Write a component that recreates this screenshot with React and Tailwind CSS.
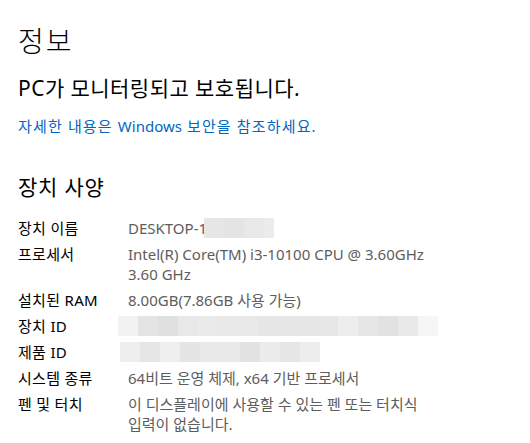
import React from "react";

function Blur({ colors, last }) {
  return (
    <div className="flex h-5">
      {colors.map((c, i) => (
        <div key={i} className="h-5" style={{ width: i === colors.length - 1 && last ? last : 20, backgroundColor: c }} />
      ))}
    </div>
  );
}

function Row({ label, children }) {
  return (
    <div className="flex">
      <div className="w-[110px] shrink-0 text-[15px] leading-5 tracking-[0.3px] text-black">{label}</div>
      <div className="text-[15px] leading-5 text-[#5d5d5d]">{children}</div>
    </div>
  );
}

export default function App() {
  return (
    <div className="w-[530px] h-[443px] bg-white overflow-hidden pl-[18px]" style={{ fontFamily: '"Noto Sans", "Noto Sans CJK KR", sans-serif' }}>
      <h1 className="pt-[21px] text-[28px] leading-[40px] font-light tracking-[2px] text-black">정보</h1>
      <h2 className="mt-[13px] text-[21px] leading-[28px] tracking-[0.45px] text-black">PC가 모니터링되고 보호됩니다.</h2>
      <p className="mt-[14px] text-[15px] leading-5 text-[#0067c0]">
        <span className="tracking-[1.15px]">자세한 내용은 </span>Windows<span className="tracking-[1.15px]"> 보안을 참조하세요.</span>
      </p>
      <h2 className="mt-[37px] text-[21px] leading-[28px] tracking-[0.8px] text-black">장치 사양</h2>
      <div className="mt-[17px] flex flex-col gap-[6px]">
        <Row label="장치 이름">
          <div className="flex items-center">
            <span>DESKTOP-1</span>
            <div className="flex h-5 -ml-[3px]">
              <div className="w-5 h-5 bg-[#e6e6e6]" />
              <div className="w-5 h-5 bg-[#e4e4e4]" />
              <div className="w-5 h-5 bg-[#e8e8e8]" />
              <div className="w-[10px] h-5 bg-[#ececec]" />
            </div>
          </div>
        </Row>
        <Row label="프로세서">
          <div>Intel(R) Core(TM) i3-10100 CPU @ 3.60GHz</div>
          <div>3.60 GHz</div>
        </Row>
        <Row label="설치된 RAM">8.00GB(7.86GB 사용 가능)</Row>
        <Row label="장치 ID">
          <div className="-ml-[10px]">
            <Blur colors={["#f2f2f2", "#e4e4e4", "#e0e0e0", "#e8e8e8", "#eaeaea", "#e9e9e9", "#e9e9e9", "#e6e6e6", "#e6e6e6", "#e6e6e6", "#e7e7e7", "#ededed", "#e6e6e6", "#e2e2e2", "#e9e9e9", "#f6f6f6"]} />
          </div>
        </Row>
        <Row label="제품 ID">
          <div className="-ml-[8px]">
            <Blur colors={["#eeeeee", "#e6e6e6", "#efefef", "#e5e5e5", "#e9e9e9", "#e9e9e9", "#e2e2e2", "#ececec", "#e6e6e6", "#ededed"]} />
          </div>
        </Row>
        <Row label="시스템 종류">64비트 운영 체제, x64 기반 프로세서</Row>
        <Row label="펜 및 터치">
          <div>이 디스플레이에 사용할 수 있는 펜 또는 터치식</div>
          <div>입력이 없습니다.</div>
        </Row>
      </div>
    </div>
  );
}
